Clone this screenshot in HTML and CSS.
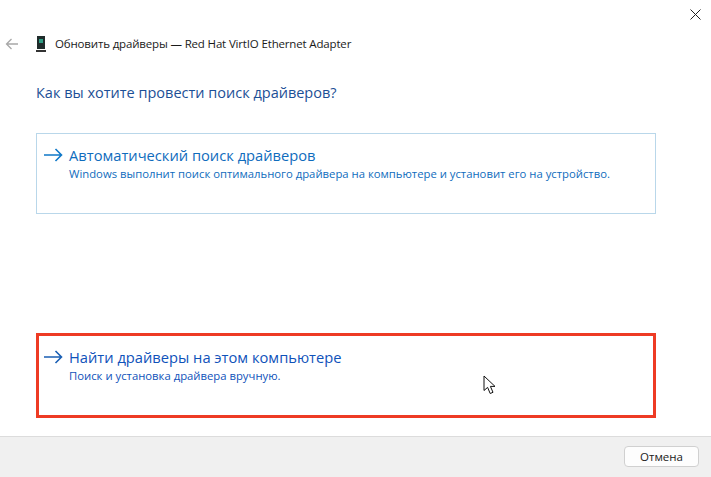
FILE: index.html
```html
<!DOCTYPE html>
<html lang="ru">
<head>
  <meta charset="UTF-8">
  <title>Обновить драйверы</title>
  <link rel="stylesheet" href="styles.css">
</head>
<body>
  <div class="window">
    <!-- Title bar -->
    <div class="close-row">
      <svg class="close-icon" width="11" height="11" viewBox="0 0 11 11">
        <path d="M0.5 0.5L10.5 10.5M10.5 0.5L0.5 10.5" stroke="#222" stroke-width="1" fill="none"/>
      </svg>
    </div>
    <div class="nav-row">
      <svg class="back-icon" width="14" height="12" viewBox="0 0 14 12">
        <path d="M13 6H1.5M6.5 1L1.5 6L6.5 11" stroke="#a8a8a8" stroke-width="1.3" fill="none"/>
      </svg>
      <svg class="device-icon" width="10" height="16" viewBox="0 0 10 16">
        <rect x="1" y="0" width="8" height="13" fill="#1f2b2b"/>
        <rect x="3" y="3" width="4" height="4" fill="#2f9c83"/>
        <rect x="0" y="14" width="10" height="2" fill="#333"/>
      </svg>
      <span class="nav-title">Обновить драйверы — Red Hat VirtIO Ethernet Adapter</span>
    </div>

    <h1 class="question">Как вы хотите провести поиск драйверов?</h1>

    <!-- Options -->
    <div class="option option-auto">
      <svg class="arrow" width="19" height="14" viewBox="0 0 19 14">
        <path d="M0 7H17.5M11.5 1L17.5 7L11.5 13" stroke="#0f78c8" stroke-width="1.6" fill="none"/>
      </svg>
      <div>
        <div class="option-title">Автоматический поиск драйверов</div>
        <div class="option-desc">Windows выполнит поиск оптимального драйвера на компьютере и установит его на устройство.</div>
      </div>
    </div>

    <div class="option option-manual">
      <svg class="arrow" width="19" height="14" viewBox="0 0 19 14">
        <path d="M0 7H17.5M11.5 1L17.5 7L11.5 13" stroke="#1a5fb4" stroke-width="1.6" fill="none"/>
      </svg>
      <div>
        <div class="option-title">Найти драйверы на этом компьютере</div>
        <div class="option-desc">Поиск и установка драйвера вручную.</div>
      </div>
    </div>

    <div class="footer">
      <button class="cancel">Отмена</button>
    </div>

    <svg class="cursor" width="15" height="20" viewBox="0 0 15 20">
      <path d="M1 1V15.5L4.6 12.4L7.2 18.5L10 17.3L7.4 11.4H12L1 1Z" fill="#fff" stroke="#111" stroke-width="1"/>
    </svg>
  </div>
</body>
</html>
```

FILE: styles.css
```css
* {
  margin: 0;
  padding: 0;
  box-sizing: border-box;
}
body {
  font-family: "Open Sans", "Noto Sans", sans-serif;
  background: #fff;
  overflow: hidden;
}
.window {
  position: relative;
  width: 711px;
  height: 477px;
  display: flex;
  flex-direction: column;
}
.close-row {
  height: 36px;
  display: flex;
  justify-content: flex-end;
  padding: 9px 10px 0 0;
}
.close-icon {
  display: block;
}
.nav-row {
  height: 16px;
  display: flex;
  align-items: center;
  padding-left: 5px;
}
.device-icon {
  margin-left: 17px;
}
.nav-title {
  margin: -2px 0 0 9px;
  font-size: 11.5px;
  color: #1a1a1a;
  letter-spacing: -0.16px;
  white-space: nowrap;
}
.question {
  margin: 29px 0 0 36px;
  height: 52px;
  font-size: 14.5px;
  line-height: 24px;
  font-weight: 400;
  color: #1c4f96;
}
.option {
  margin-left: 36px;
  width: 620px;
  display: flex;
  align-items: flex-start;
  gap: 6px;
}
.option-auto {
  height: 81px;
  border: 1px solid #b9d7ea;
  padding: 11px 0 0 7px;
  color: #0f6cbd;
}
.option-manual {
  margin-top: 119px;
  height: 85px;
  border: 3px solid #ee3b24;
  padding: 11px 0 0 5px;
  color: #0f52ba;
}
.arrow {
  margin-top: 3px;
  flex-shrink: 0;
}
.option-title {
  font-size: 14.7px;
  line-height: 21px;
  white-space: nowrap;
}
.option-desc {
  font-size: 11.3px;
  line-height: 15px;
  white-space: nowrap;
}
.footer {
  margin-top: auto;
  height: 41px;
  background: #f0f0f0;
  border-top: 1px solid #dcdcdc;
  display: flex;
  justify-content: flex-end;
  align-items: flex-start;
  padding: 9px 12px 0 0;
}
.cancel {
  width: 75px;
  height: 21px;
  background: #fdfdfd;
  border: 1px solid #d0d0d0;
  border-radius: 4px;
  font-family: inherit;
  font-size: 11.5px;
  color: #1a1a1a;
}
.cursor {
  position: absolute;
  left: 483px;
  top: 375px;
}
```
